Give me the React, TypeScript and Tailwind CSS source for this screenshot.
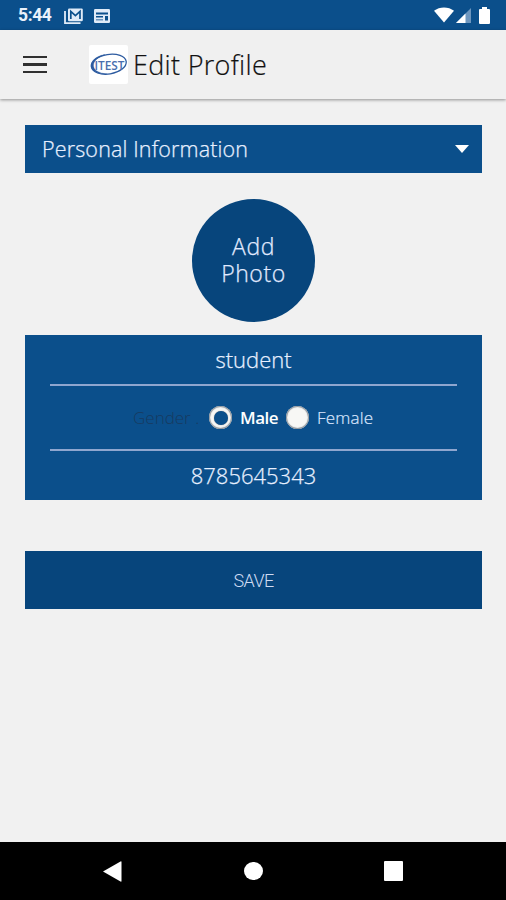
import React from "react";

function StatusBar() {
  return (
    <header className="flex h-[30px] shrink-0 items-center bg-[#0b4f8b] pt-[2px] pl-[18px] pr-[16px] text-white">
      <span className="w-[34px] whitespace-nowrap font-['Roboto',sans-serif] text-[17.5px] leading-none font-bold tracking-[-0.4px] text-[#e9f1fb]">5:44</span>
      <svg className="ml-[12px]" width="19" height="17" viewBox="0 0 19 17">
        <path d="M1 3v12.2h15.5" fill="none" stroke="#e0ebf8" strokeWidth="1.8" />
        <rect x="4" y="0.5" width="14.8" height="12.8" rx="1.2" fill="#e0ebf8" />
        <path d="M6.8 11V3.4l4.6 4.2L16 3.4V11" fill="none" stroke="#0b4f8b" strokeWidth="1.7" />
      </svg>
      <svg className="ml-[11px]" width="16" height="14" viewBox="0 0 16 14">
        <rect width="16" height="14" rx="1.2" fill="#e0ebf8" />
        <path d="M2 3.500h12v2H2zM2 7h7v1.500H2zM11 7h3v4.500h-3z" fill="#0b4f8b" />
        <path d="M2 10h7v1.500H2z" fill="#6d96be" />
      </svg>
      <svg className="-mt-[2px] ml-auto" width="20" height="16" viewBox="0 0 20 16">
        <path d="M0 3.8C5.5-.7 14.500-.7 20 3.800L10 15.500z" fill="#fff" />
      </svg>
      <svg className="-mt-[1px] ml-[2px]" width="15" height="15" viewBox="0 0 15 15">
        <path d="M15 0v15H0z" fill="#6d96be" />
        <path d="M9.500 5.500V15H0z" fill="#fff" />
      </svg>
      <svg className="-mt-[2px] ml-[8px]" width="11" height="17" viewBox="0 0 11 17">
        <path d="M3 0h5v2h2q1 0 1 1v13q0 1-1 1H1q-1 0-1-1V3q0-1 1-1h2z" fill="#fff" />
      </svg>
    </header>
  );
}

function Logo() {
  return (
    <svg className="ml-[42.500px]" width="39" height="39" viewBox="0 0 39 39">
      <rect width="39" height="39" rx="2" fill="#fff" />
      <g fill="none" stroke="#2d5ba0">
        <ellipse cx="19.800" cy="19.200" rx="17.600" ry="9.800" strokeWidth="1.300" transform="rotate(-9 19.800 19.200)" />
        <path d="M16 9.500C7 11 1.500 16 2.200 21.500c1 5 8 8 16 7.500C9 28 4.500 25 4.500 20.500 4.500 16 9 12 16 9.500z" fill="#2d5ba0" strokeWidth="0.300" />
      </g>
      <text x="5.500" y="24.500" textLength="30" lengthAdjust="spacingAndGlyphs" fill="#4a6fae" fontFamily="Open Sans, sans-serif" fontSize="12" fontWeight="600">ITEST</text>
    </svg>
  );
}

function AppBar() {
  return (
    <div className="z-10 flex h-[69px] shrink-0 items-center bg-[#f0f0f0] pl-[23px] shadow-[0_1px_3px_rgba(0,0,0,0.4)]">
      <div className="flex w-[23.500px] flex-col gap-[5px]">
        <i className="h-[2.500px] bg-[#303030]" />
        <i className="h-[2.500px] bg-[#303030]" />
        <i className="h-[2.500px] bg-[#303030]" />
      </div>
      <Logo />
      <h1 className="ml-[5px] whitespace-nowrap text-[27px] leading-[38px] font-light tracking-[0.300px] text-[#111] [-webkit-text-stroke:0.2px_#111]">Edit Profile</h1>
    </div>
  );
}

function Radio({ checked, label }: { checked?: boolean; label: string }) {
  return (
    <label className="flex items-center">
      <span className="flex size-[23px] items-center justify-center rounded-full bg-[#f7f7f5] shadow-[inset_0_0_1px_1px_#8b9299]">
        {checked && <span className="size-[14px] rounded-full bg-[#0b4f8b] shadow-[0_0_1px_#777]" />}
      </span>
      <span className={checked ? "ml-[8px] w-[38px] whitespace-nowrap font-semibold tracking-[-0.500px] text-white" : "ml-[8px] whitespace-nowrap font-light tracking-[0.200px] text-[#dce7ff] [-webkit-text-stroke:0.2px_#dce7ff]"}>{label}</span>
    </label>
  );
}

export default function App() {
  return (
    <div className="flex h-[900px] w-[506px] flex-col overflow-hidden bg-[#f1f1f1] font-['Open_Sans','Noto_Sans',sans-serif]">
      <StatusBar />
      <AppBar />
      <main className="flex grow flex-col pl-[25px] pr-[24px] pt-[26px]">
        <button className="flex h-[48px] w-full shrink-0 items-center justify-between bg-[#0b4f8b] pl-[17px] pr-[13px] text-[21.500px] font-light tracking-[0.150px] text-[#e7efff] [-webkit-text-stroke:0.25px_#e7efff]">
          <span className="whitespace-nowrap">Personal Information</span>
          <svg width="14" height="8" viewBox="0 0 14 8"><path d="M0 0h14L7 8z" fill="#fff" /></svg>
        </button>
        <button className="mt-[25.500px] ml-[167px] flex size-[123px] shrink-0 flex-col items-center justify-center rounded-full bg-[#07457c] text-center text-[23px] leading-[27px] font-light tracking-[0.600px] text-[#e1eaff] [-webkit-text-stroke:0.25px_#e1eaff]">
          <span className="block h-[27px]">Add</span>
          <span className="block h-[27px]">Photo</span>
        </button>
        <section className="mt-[13px] flex h-[165px] w-full shrink-0 flex-col bg-[#0b4f8b] px-[25px] text-[#e7efff]">
          <div className="flex h-[51px] items-center justify-center border-b-2 border-[#8fa6cf] pt-[1px] text-[22px] font-light [-webkit-text-stroke:0.25px_#e7efff]"><span>student</span></div>
          <div className="flex h-[65px] items-center border-b-2 border-[#8fa6cf] pt-px pl-[83px] text-[17px]">
            <span className="w-[76px] whitespace-nowrap font-light text-[#173a60]">Gender .</span>
            <Radio checked label="Male" />
            <span className="w-[8px]" />
            <Radio label="Female" />
          </div>
          <div className="flex h-[49px] items-center justify-center text-[22px] font-light [-webkit-text-stroke:0.25px_#e7efff]"><span>8785645343</span></div>
        </section>
        <button className="mt-[51px] flex h-[58.500px] w-full shrink-0 items-center justify-center bg-[#07457c] pt-[2px] font-['Roboto',sans-serif] text-[18px] font-light tracking-[-0.600px] text-[#cfdbf3]">SAVE</button>
      </main>
      <nav className="flex h-[58px] shrink-0 items-center bg-black pl-[103px]">
        <svg width="19" height="21" viewBox="0 0 19 21"><path d="M0 10.500L17.500 0.500q1-.5 1 .5v19q0 1-1 .5z" fill="#fff" /></svg>
        <span className="ml-[122px] size-[18.500px] rounded-full bg-white" />
        <span className="ml-[121px] size-[19.500px] rounded-[1px] bg-white" />
      </nav>
    </div>
  );
}
